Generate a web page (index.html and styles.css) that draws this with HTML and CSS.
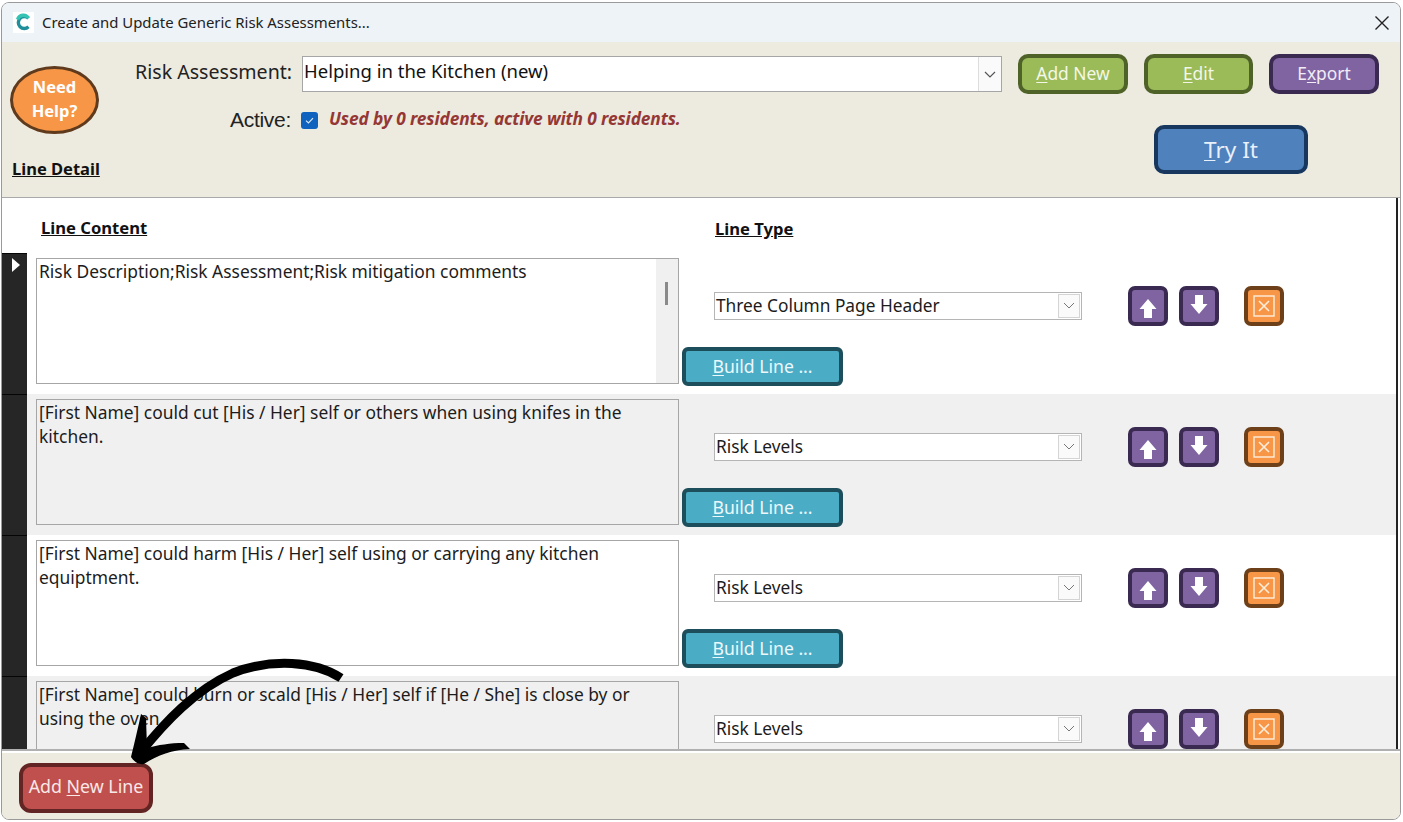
FILE: index.html
```html
<!DOCTYPE html>
<html lang="en">
<head>
<meta charset="utf-8">
<title>Create and Update Generic Risk Assessments</title>
<link rel="stylesheet" href="styles.css">
</head>
<body>
<div class="window">
  <div class="titlebar">
    <svg class="app-icon" width="21" height="21" viewBox="0 0 21 21"><rect width="21" height="21" fill="#fff"/><path d="M15.5 6.2A6 6 0 1 0 15.5 14.8" fill="none" stroke="#1f8f9c" stroke-width="3.4"/><path d="M4.6 7.5A6 6 0 0 1 15.5 6.2" fill="none" stroke="#35c4b4" stroke-width="3.4"/></svg>
    <span class="title">Create and Update Generic Risk Assessments...</span>
    <svg class="close" width="16" height="16" viewBox="0 0 16 16"><path d="M1.5 1.5L14.5 14.5M14.5 1.5L1.5 14.5" stroke="#222" stroke-width="1.4" fill="none"/></svg>
  </div>

  <header class="head">
    <div class="head-left">
      <div class="help">Need<br>Help?</div>
      <div class="line-detail">Line Detail</div>
    </div>
    <div class="head-mid">
      <div class="ra-row">
        <span class="ra-label">Risk Assessment:</span>
        <div class="ra-input">
          <span class="ra-value">Helping in the Kitchen (new)</span>
          <span class="ra-drop"><svg width="12" height="7" viewBox="0 0 12 7"><path d="M1 1L6 6L11 1" fill="none" stroke="#555" stroke-width="1.2"/></svg></span>
        </div>
      </div>
      <div class="active-row">
        <span class="active-label">Active:</span>
        <span class="check"><svg width="17" height="17" viewBox="0 0 17 17"><path d="M5 8.6L7.5 11L12 6.2" fill="none" stroke="#dbe8f7" stroke-width="1.2"/></svg></span>
        <span class="used">Used by 0 residents, active with 0 residents.</span>
      </div>
    </div>
    <div class="head-right">
      <div class="btn-row">
        <div class="btn green w110"><span><u>A</u>dd New</span></div>
        <div class="btn green w109"><span><u>E</u>dit</span></div>
        <div class="btn purple w110"><span>E<u>x</u>port</span></div>
      </div>
      <div class="btn blue try"><span><u>T</u>ry It</span></div>
    </div>
  </header>

  <main class="body">
    <div class="list">
      <div class="col-heads">
        <span class="col-content">Line Content</span>
        <span class="col-type">Line Type</span>
      </div>

      <div class="row">
        <div class="marker"><span class="tri"></span></div>
        <div class="box">
          <div class="box-text">Risk Description;Risk Assessment;Risk mitigation comments</div>
          <div class="scroll"><span class="thumb"></span></div>
        </div>
        <div class="controls">
          <div class="ctl-top">
            <div class="select"><span class="sel-val">Three Column Page Header</span><span class="sel-drop"><svg width="12" height="7" viewBox="0 0 12 7"><path d="M1 1L6 6L11 1" fill="none" stroke="#777" stroke-width="1"/></svg></span></div>
            <div class="sq purple up"><svg width="18" height="19" viewBox="0 0 18 19"><path d="M9 0L17.5 10H13V19H5V10H.5Z" fill="#fff"/></svg></div>
            <div class="sq purple down"><svg width="18" height="19" viewBox="0 0 18 19"><path d="M9 19L17.5 9H13V0H5V9H.5Z" fill="#fff"/></svg></div>
            <div class="sq orange del"><svg width="22" height="22" viewBox="0 0 22 22"><rect x="1" y="1" width="20" height="20" fill="none" stroke="#ffeedd" stroke-width="1.4"/><path d="M6 6L16 16M16 6L6 16" stroke="#ffeedd" stroke-width="1.6" fill="none"/></svg></div>
          </div>
          <div class="btn teal build"><span><u>B</u>uild Line ...</span></div>
        </div>
      </div>

      <div class="row alt">
        <div class="marker"></div>
        <div class="box">
          <div class="box-text">[First Name] could cut [His / Her] self or others when using knifes in the kitchen.</div>
        </div>
        <div class="controls">
          <div class="ctl-top">
            <div class="select"><span class="sel-val">Risk Levels</span><span class="sel-drop"><svg width="12" height="7" viewBox="0 0 12 7"><path d="M1 1L6 6L11 1" fill="none" stroke="#777" stroke-width="1"/></svg></span></div>
            <div class="sq purple up"><svg width="18" height="19" viewBox="0 0 18 19"><path d="M9 0L17.5 10H13V19H5V10H.5Z" fill="#fff"/></svg></div>
            <div class="sq purple down"><svg width="18" height="19" viewBox="0 0 18 19"><path d="M9 19L17.5 9H13V0H5V9H.5Z" fill="#fff"/></svg></div>
            <div class="sq orange del"><svg width="22" height="22" viewBox="0 0 22 22"><rect x="1" y="1" width="20" height="20" fill="none" stroke="#ffeedd" stroke-width="1.4"/><path d="M6 6L16 16M16 6L6 16" stroke="#ffeedd" stroke-width="1.6" fill="none"/></svg></div>
          </div>
          <div class="btn teal build"><span><u>B</u>uild Line ...</span></div>
        </div>
      </div>

      <div class="row">
        <div class="marker"></div>
        <div class="box">
          <div class="box-text">[First Name] could harm [His / Her] self using or carrying any kitchen equiptment.</div>
        </div>
        <div class="controls">
          <div class="ctl-top">
            <div class="select"><span class="sel-val">Risk Levels</span><span class="sel-drop"><svg width="12" height="7" viewBox="0 0 12 7"><path d="M1 1L6 6L11 1" fill="none" stroke="#777" stroke-width="1"/></svg></span></div>
            <div class="sq purple up"><svg width="18" height="19" viewBox="0 0 18 19"><path d="M9 0L17.5 10H13V19H5V10H.5Z" fill="#fff"/></svg></div>
            <div class="sq purple down"><svg width="18" height="19" viewBox="0 0 18 19"><path d="M9 19L17.5 9H13V0H5V9H.5Z" fill="#fff"/></svg></div>
            <div class="sq orange del"><svg width="22" height="22" viewBox="0 0 22 22"><rect x="1" y="1" width="20" height="20" fill="none" stroke="#ffeedd" stroke-width="1.4"/><path d="M6 6L16 16M16 6L6 16" stroke="#ffeedd" stroke-width="1.6" fill="none"/></svg></div>
          </div>
          <div class="btn teal build"><span><u>B</u>uild Line ...</span></div>
        </div>
      </div>

      <div class="row alt">
        <div class="marker"></div>
        <div class="box">
          <div class="box-text">[First Name] could burn or scald [His / Her] self if [He / She] is close by or using the oven</div>
        </div>
        <div class="controls">
          <div class="ctl-top">
            <div class="select"><span class="sel-val">Risk Levels</span><span class="sel-drop"><svg width="12" height="7" viewBox="0 0 12 7"><path d="M1 1L6 6L11 1" fill="none" stroke="#777" stroke-width="1"/></svg></span></div>
            <div class="sq purple up"><svg width="18" height="19" viewBox="0 0 18 19"><path d="M9 0L17.5 10H13V19H5V10H.5Z" fill="#fff"/></svg></div>
            <div class="sq purple down"><svg width="18" height="19" viewBox="0 0 18 19"><path d="M9 19L17.5 9H13V0H5V9H.5Z" fill="#fff"/></svg></div>
            <div class="sq orange del"><svg width="22" height="22" viewBox="0 0 22 22"><rect x="1" y="1" width="20" height="20" fill="none" stroke="#ffeedd" stroke-width="1.4"/><path d="M6 6L16 16M16 6L6 16" stroke="#ffeedd" stroke-width="1.6" fill="none"/></svg></div>
          </div>
        </div>
      </div>
    </div>
  </main>

  <footer class="foot">
    <div class="btn red add-line"><span>Add <u>N</u>ew Line</span></div>
  </footer>
</div>

<svg class="pointer" width="1403" height="822" viewBox="0 0 1403 822">
  <path d="M341 678C315 661 272 658 233 673C195 690 165 722 141 752" fill="none" stroke="#000" stroke-width="9"/>
  <path d="M141 714C138 728 134 745 131 757C134 762 139 765 144 764C158 755 172 750 190 749L184 743C170 743 158 745 147 748L146 718Z" fill="#000"/>
</svg>
</body>
</html>
```
FILE: styles.css
```css
* { box-sizing: border-box; }
html, body { margin: 0; padding: 0; background: #fff; overflow: hidden; }
body { width: 1403px; height: 822px; padding: 2px 2px 2px 1px; font-family: "Noto Sans", "Open Sans", sans-serif; color: #1a1a1a; }
u { text-decoration-thickness: 1px; text-underline-offset: 2px; }

.window { width: 1400px; height: 818px; display: flex; flex-direction: column; border: 1px solid #9a9a9a; border-radius: 8px; overflow: hidden; background: #fff; }

.titlebar { height: 39px; flex: none; display: flex; align-items: center; padding: 0 10px 0 11px; background: #eef3f8; }
.app-icon { flex: none; }
.title { margin-left: 8px; padding-bottom: 2px; font-size: 14.9px; color: #222; flex: 1; }
.close { flex: none; }

.head { height: 156px; flex: none; display: flex; background: #edeadf; border-bottom: 1px solid #a9a9a9; }
.head-left { width: 128px; flex: none; padding: 24px 0 0 8px; }
.help { width: 89px; height: 68px; padding-bottom: 2px; display: flex; align-items: center; justify-content: center; text-align: center; border: 3px solid #5f3a1c; border-radius: 50%; background: #f79646; color: #fff; font-weight: 700; font-size: 16.5px; line-height: 24px; }
.line-detail { margin-top: 24px; margin-left: 2px; font-size: 16.5px; line-height: 22px; font-weight: 700; text-decoration: underline; color: #111; }

.head-mid { width: 888px; flex: none; padding-top: 14px; }
.ra-row { display: flex; align-items: center; height: 36px; }
.ra-label { margin-left: 5px; width: 167px; margin-bottom: 5px; font-size: 19.6px; white-space: nowrap; color: #222; }
.ra-input { width: 700px; height: 36px; display: flex; align-items: center; justify-content: space-between; background: #fff; border: 1px solid #a6a6a6; }
.ra-value { margin-left: 1px; margin-bottom: 8px; font-size: 18.5px; color: #111; }
.ra-drop { width: 23px; height: 34px; display: flex; align-items: center; justify-content: center; background: #fafafa; border-left: 1px solid #ddd; }
.active-row { display: flex; align-items: center; height: 24px; margin-top: 16px; margin-left: 100px; }
.active-label { font-family: "Liberation Sans", sans-serif; font-size: 21px; color: #222; width: 71px; letter-spacing: -.3px; }
.check { width: 17px; height: 17px; border-radius: 3px; background: #0f62be; display: flex; }
.used { margin-left: 11px; font-size: 17.3px; font-weight: 700; font-style: italic; color: #953735; white-space: nowrap; letter-spacing: -.1px; margin-top: -4px; }

.head-right { flex: 1; padding-top: 12px; }
.btn-row { display: flex; gap: 16px; }
.btn { display: flex; align-items: center; justify-content: center; border-style: solid; border-width: 4px; border-radius: 10px; white-space: nowrap; }
.w110 { width: 110px; }
.w109 { width: 109px; }
.btn-row .btn { height: 40px; font-size: 17.4px; padding-bottom: 2px; }
.green { background: #9bbb59; border-color: #4f6228; color: #f4f7e8; }
.purple { background: #8064a2; border-color: #3a2a52; color: #f1ecf6; }
.blue { background: #4f81bd; border-color: #17375e; color: #e8f0fa; }
.teal { background: #4bacc6; border-color: #1d4e5c; color: #ecf8fb; }
.red { background: #c0504d; border-color: #632523; color: #f8e8e8; }
.orange { background: #f79646; border-color: #6e4019; }
.try { width: 154px; height: 49px; margin-top: 31px; margin-left: 136px; font-size: 22.6px; padding-bottom: 1px; }

.body { flex: 1; min-height: 0; overflow: hidden; background: #fff; padding-right: 2px; }
.list { height: 100%; overflow: hidden; border-right: 2px solid #222; }
.col-heads { height: 55px; display: flex; align-items: flex-start; padding-top: 19px; font-size: 16.6px; line-height: 22px; font-weight: 700; color: #111; }
.col-heads span { text-decoration: underline; }
.col-content { margin-left: 39px; width: 674px; }
.col-type { padding-top: 1px; }

.row { height: 141px; display: flex; background: #fff; }
.row.alt { background: #f0f0f0; }
.marker { width: 25px; flex: none; background: #262626; border-top: 1px solid #050505; padding: 4px 0 0 10px; }
.tri { display: block; width: 0; height: 0; border-style: solid; border-width: 7px 0 7px 8px; border-color: transparent transparent transparent #fff; }
.box { width: 643px; height: 126px; margin: 5px 0 0 9px; flex: none; display: flex; border: 1px solid #a6a6a6; background: inherit; }
.box-text { flex: 1; padding: 0 30px 0 2px; font-size: 17.4px; line-height: 24px; color: #1c1c1c; }
.scroll { width: 22px; flex: none; background: #f0f0f0; padding: 23px 0 0 9px; }
.thumb { display: block; width: 3px; height: 23px; background: #8a8a8a; }

.controls { flex: none; margin-left: 3px; width: 620px; }
.ctl-top { display: flex; align-items: flex-start; height: 94px; padding-top: 33px; }
.select { width: 368px; height: 28px; margin: 6px 46px 0 32px; padding-bottom: 1px; display: flex; justify-content: space-between; align-items: center; background: #fff; border: 1px solid #b5b5b5; }
.sel-val { margin-left: 1px; font-size: 17.3px; color: #1c1c1c; white-space: nowrap; }
.sel-drop { width: 22px; height: 24px; margin-right: 1px; display: flex; align-items: center; justify-content: center; background: #fafafa; border: 1px solid #d4d4d4; }
.sq { width: 40px; height: 40px; flex: none; display: flex; align-items: center; justify-content: center; border-style: solid; border-width: 4px; border-radius: 7px; }
.up { margin-right: 11px; padding-top: 5px; }
.down { margin-right: 25px; padding-bottom: 4px; }
.build { width: 161px; height: 39px; font-size: 17.6px; padding-bottom: 2px; border-radius: 6px; }

.foot { height: 70px; flex: none; background: #edeadf; border-top: 2px solid #b0b0b0; box-shadow: inset 0 2px 0 #fff; padding: 12px 0 0 17px; }
.add-line { width: 134px; height: 50px; font-size: 17.8px; border-radius: 12px; padding-bottom: 4px; }

.pointer { position: absolute; left: 0; top: 0; pointer-events: none; }
```
